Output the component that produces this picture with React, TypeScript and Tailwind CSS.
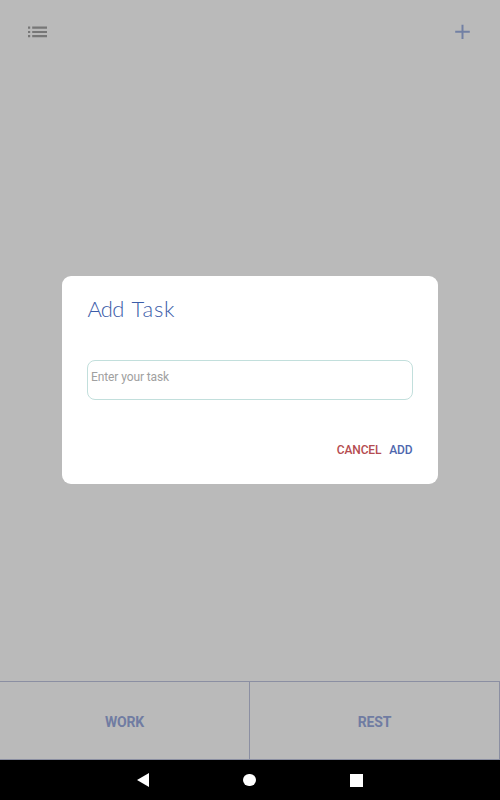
function ListIcon() {
  return (
    <svg className="h-[12px] w-[20px]" viewBox="0 0 20 12" fill="#777777">
      <path d="M0 .6h2.200v2.200H0zM4.200 .6H19v2.200H4.200zM0 4.900h2.200v2.200H0zM4.200 4.900H19v2.200H4.200zM0 9.100h2.200v2.200H0zM4.200 9.100H19v2.200H4.200z" />
    </svg>
  );
}

function PlusIcon() {
  return (
    <svg className="h-[16px] w-[16px]" viewBox="0 0 16 16" fill="#7280a4">
      <path d="M6.500 .8h2v6h6.300v2H8.500v6.300h-2V8.800H.2v-2h6.300z" />
    </svg>
  );
}

function TimerButton({ label }: { label: string }) {
  return (
    <button className="flex flex-1 items-center justify-center border-r border-b border-[#8b8fa2] pt-[2px] text-[14px] leading-[20px] font-bold tracking-[-0.2px] text-[#707ca2]">
      {label}
    </button>
  );
}

function AddTaskDialog() {
  return (
    <section className="flex h-[208px] w-[376px] flex-col rounded-[9px] bg-white px-[25px]">
      <h1 className="mt-[17px] flex h-[32px] gap-[9px] pl-[0.5px] font-['Lato'] text-[22px] leading-[32px] font-light whitespace-nowrap text-[#3c5da9]">
        <span className="w-[35px] tracking-[-0.8px]">Add</span>{" "}
        <span className="tracking-[0.8px]">Task</span>
      </h1>
      <input
        className="mt-[35px] h-[40px] w-full rounded-[8px] border border-[#c2dfdc] pr-2 pb-[6px] pl-[3px] text-[12px] tracking-[-0.1px] outline-none placeholder:text-[#a0a0a0]"
        placeholder="Enter your task"
      />
      <div className="mt-[42px] flex justify-end gap-[8px] pr-[0.5px] text-[12px] leading-[17px] font-medium tracking-[-0.15px]">
        <button className="text-[#b54c50]">CANCEL</button>
        <button className="text-[#4e67ae]">ADD</button>
      </div>
    </section>
  );
}

export default function App() {
  return (
    <div className="relative flex h-[800px] w-[500px] flex-col overflow-hidden bg-[#bababa] font-['Roboto',sans-serif]">
      <header className="flex h-[64px] items-center justify-between pr-[29px] pl-[28px]">
        <ListIcon />
        <PlusIcon />
      </header>
      <main className="flex-1" />
      <div className="flex h-[79px] border-t border-[#8b8fa2]">
        <TimerButton label="WORK" />
        <TimerButton label="REST" />
      </div>
      <nav className="flex h-[40px] items-center justify-between bg-black px-[137px]">
        <svg className="h-[14px] w-[12px]" viewBox="0 0 12 14" fill="white">
          <path d="M0 7L12 0v14z" />
        </svg>
        <span className="h-[12.500px] w-[12.500px] rounded-full bg-white" />
        <span className="h-[13px] w-[13px] bg-white" />
      </nav>
      <div className="absolute inset-x-0 top-[276px] flex justify-center">
        <AddTaskDialog />
      </div>
    </div>
  );
}
